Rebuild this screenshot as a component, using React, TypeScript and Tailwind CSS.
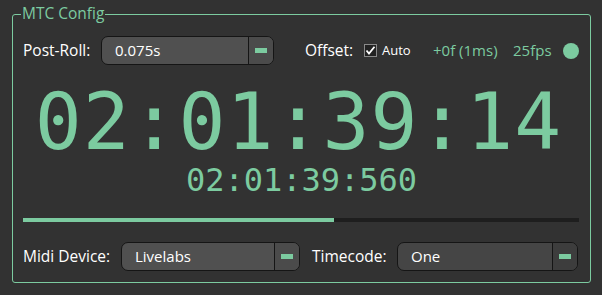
import * as React from 'react';

const GREEN = 'text-[#7ccba0]';

interface ComboProps {
  value: string;
  width: string;
  dark?: boolean;
}

function Combo({ value, width, dark }: ComboProps) {
  return (
    <div
      className={`${width} h-[29px] flex rounded-[7px] border border-[#151515] overflow-hidden ${
        dark ? 'bg-[#454545]' : 'bg-[#505050]'
      }`}
    >
      <div className="flex-1 flex items-center pl-[13px] text-[15px] text-white">{value}</div>
      <div
        className={`w-[25px] flex items-center justify-center border-l border-[#151515] ${
          dark ? 'bg-[#3d3d3d]' : 'bg-[#4b4b4b]'
        }`}
      >
        <div className="w-[12px] h-[5px] bg-[#7ccba0]" />
      </div>
    </div>
  );
}

function CheckBox() {
  return (
    <div className="w-[13px] h-[13px] border border-[#8a8a8a] bg-[#222222] flex items-center justify-center">
      <svg width="11" height="11" viewBox="0 0 11 11">
        <path d="M1.5 5.5 L4 8.5 L9.5 1.8" fill="none" stroke="#ffffff" strokeWidth="1.8" />
      </svg>
    </div>
  );
}

export default function App() {
  return (
    <div
      className="w-[602px] h-[295px] bg-[#323232] pt-[14px] pl-[12px]"
      style={{ fontFamily: '"Open Sans", Lato, sans-serif' }}
    >
      <div className="relative w-[579px] h-[269px] border border-[#7ccba0] rounded-[3px] pt-[21px] px-[10px]">
        <span
          className={`absolute left-[8px] top-[-12px] px-[1px] bg-[#323232] text-[15.5px] leading-[20px] ${GREEN}`}
        >
          MTC Config
        </span>

        <div className="flex items-center h-[29px] text-[15.5px] text-white">
          <span className="w-[78px]">Post-Roll:</span>
          <Combo value="0.075s" width="w-[173px]" />
          <span className="ml-[31px] w-[59px]">Offset:</span>
          <CheckBox />
          <span className="ml-[5px] w-[51px] text-[13px]">Auto</span>
          <span className={`w-[80px] text-[15px] ${GREEN}`}>+0f (1ms)</span>
          <span className={`w-[50px] text-[15px] ${GREEN}`}>25fps</span>
          <div className="w-[16px] h-[16px] rounded-full bg-[#7ccba0]" />
        </div>

        <div
          className={`mt-[18px] pr-[6px] text-center text-[78px] leading-none tracking-[1px] ${GREEN}`}
          style={{ fontFamily: '"DejaVu Sans Mono", monospace' }}
        >
          02:01:39:14
        </div>
        <div
          className={`mt-[3px] text-center text-[32px] leading-none ${GREEN}`}
          style={{ fontFamily: '"DejaVu Sans Mono", monospace' }}
        >
          02:01:39:560
        </div>

        <div className="mt-[22px] w-[556px] h-[4px] bg-[#1e1e1e]">
          <div className="h-full bg-[#7ccba0]" style={{ width: '56%' }} />
        </div>

        <div className="mt-[20px] flex items-center h-[29px] text-[15.5px] text-white">
          <span className="w-[98px]">Midi Device:</span>
          <Combo value="Livelabs" width="w-[179px]" />
          <span className="ml-[12px] w-[85px]">Timecode:</span>
          <Combo value="One" width="w-[181px]" dark />
        </div>
      </div>
    </div>
  );
}
